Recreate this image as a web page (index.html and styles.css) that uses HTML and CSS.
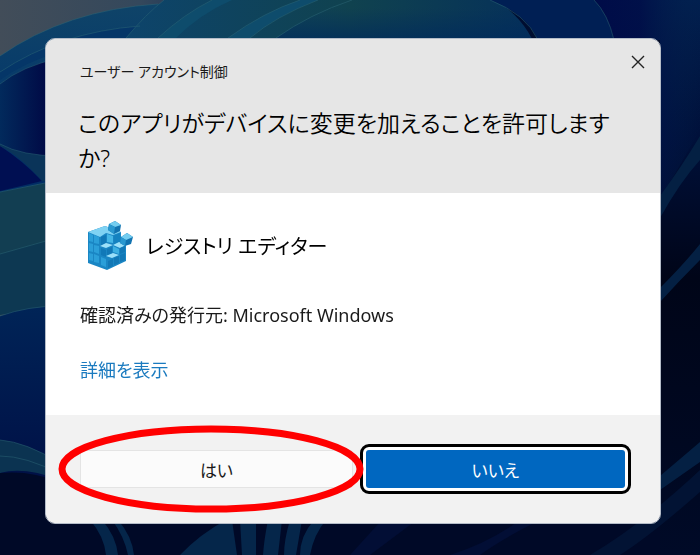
FILE: index.html
```html
<!DOCTYPE html>
<html lang="ja">
<head>
  <meta charset="UTF-8" />
  <title>ユーザー アカウント制御</title>
  <meta name="viewport" content="width=device-width, initial-scale=1.0" />
  <link rel="stylesheet" href="styles.css">
</head>
<body>

  <!-- Desktop wallpaper -->
  <svg class="wallpaper" viewBox="0 0 700 555" preserveAspectRatio="none" aria-hidden="true">
    <defs>
      <linearGradient id="sky" x1="0" y1="0" x2="1" y2="0">
        <stop offset="0" stop-color="#424d59" />
        <stop offset="0.2" stop-color="#34485c" />
        <stop offset="0.4" stop-color="#00174b" />
        <stop offset="1" stop-color="#00071e" />
      </linearGradient>
      <linearGradient id="petal" gradientUnits="userSpaceOnUse" x1="0" y1="0" x2="0" y2="200">
        <stop offset="0" stop-color="#0f4468" />
        <stop offset="0.5" stop-color="#06386a" />
        <stop offset="1" stop-color="#002a63" />
      </linearGradient>
      <linearGradient id="leaf" gradientUnits="userSpaceOnUse" x1="120" y1="0" x2="540" y2="0">
        <stop offset="0" stop-color="#0d446c" />
        <stop offset="0.55" stop-color="#10424f" />
        <stop offset="1" stop-color="#05305a" />
      </linearGradient>
      <linearGradient id="shade" gradientUnits="userSpaceOnUse" x1="0" y1="8" x2="0" y2="42">
        <stop offset="0" stop-color="#002a5c" stop-opacity="0" />
        <stop offset="1" stop-color="#002a5c" stop-opacity="0.75" />
      </linearGradient>
      <linearGradient id="deep" gradientUnits="userSpaceOnUse" x1="0" y1="0" x2="46" y2="0">
        <stop offset="0" stop-color="#022a5c" />
        <stop offset="1" stop-color="#000a46" />
      </linearGradient>
      <linearGradient id="edge" gradientUnits="userSpaceOnUse" x1="0" y1="0" x2="0" y2="555">
        <stop offset="0" stop-color="#02204f" />
        <stop offset="0.25" stop-color="#00103a" />
        <stop offset="0.5" stop-color="#000518" />
        <stop offset="1" stop-color="#000a27" />
      </linearGradient>
      <linearGradient id="corner" gradientUnits="userSpaceOnUse" x1="600" y1="0" x2="700" y2="0">
        <stop offset="0" stop-color="#000c48" />
        <stop offset="0.4" stop-color="#000c48" stop-opacity="0.8" />
        <stop offset="1" stop-color="#02244f" stop-opacity="0" />
      </linearGradient>
      <linearGradient id="side" x1="0" y1="0" x2="0" y2="1">
        <stop offset="0" stop-color="#002457" />
        <stop offset="1" stop-color="#001046" />
      </linearGradient>
    </defs>
    <rect width="700" height="555" fill="url(#sky)" />
    <path d="M0 56Q66 10 158 4H350V200H0Z" fill="url(#petal)" />
    <path d="M0 72Q60 32 140 26L128 44Q50 44 0 80Z" fill="#053668" />
    <path d="M0 84Q22 66 60 58V164Q22 160 0 144Z" fill="url(#deep)" />
    <path d="M0 146Q22 160 42 181L0 191Z" fill="#000f52" />
    <path d="M126 38Q146 14 164 0H496Q530 22 540 60H110Z" fill="url(#leaf)" />
    <path d="M158 38Q184 14 212 0H232Q200 14 176 38ZM228 38Q264 12 300 0H318Q276 16 250 38Z" fill="#0e4c6c" />
    <path d="M276 38Q310 14 352 0H496Q530 22 540 60H260Z" fill="url(#shade)" />
    <path d="M490 0Q526 14 538 40H614Q608 14 594 0Z" fill="#001f54" />
    <path d="M594 0Q608 14 614 40H660V555H700V0Z" fill="url(#edge)" />
    <path d="M594 0Q608 14 614 40H660V200L700 130V0Z" fill="url(#corner)" />
    <path d="M0 144Q22 156 60 156V184L42 181Q20 156 0 146Z" fill="#0a3459" />
    <path d="M0 192L60 180V310H0Z" fill="#123e52" />
    <path d="M0 254L60 237V306L0 315Z" fill="#0d3852" />
    <path d="M0 316Q28 306 60 306V480H0Z" fill="url(#side)" />
    <path d="M0 440Q26 442 60 463V480Q24 466 0 473Z" fill="#0b3351" />
    <path d="M0 473Q30 470 60 482V524H660V555H0Z" fill="#000927" />
    <path d="M90 520Q104 536 106 555H118Q116 536 102 520ZM112 520Q124 536 128 555H134Q132 536 118 520ZM180 555Q200 534 226 520H232L237 555ZM240 520L242 555H256V520ZM268 520Q264 540 263 555H278L282 520ZM290 520Q284 540 284 555H296L302 520ZM314 520Q300 536 300 555H310Q314 534 326 520Z" fill="#05264a" />
    <path d="M350 555L380 522H414L370 555ZM450 555Q490 542 520 520H540Q500 540 480 555Z" fill="#020e35" />
    <path d="M660 196Q682 166 700 136V160Q680 182 660 218ZM660 288Q684 264 700 244V260Q680 280 660 302ZM660 476L700 442V462L660 490Z" fill="#042043" />
    <path d="M590 555Q640 526 700 470V492Q650 536 620 555Z" fill="#021334" />
    <g fill="none" stroke="#2c6676" stroke-width="1" opacity="0.5">
      <path d="M0 56Q66 10 158 4M0 72Q60 32 140 26M0 84Q22 66 60 58M126 38Q146 14 164 0M158 38Q184 14 212 0M228 38Q264 12 300 0M250 38Q276 16 318 0M276 38Q310 14 352 0" />
      <path d="M490 0Q526 14 538 40M594 0Q608 14 614 40M0 144Q22 156 60 156M0 192L60 180M0 254L60 237M0 316Q28 306 60 306M0 440Q26 442 60 463M0 456Q26 456 60 474" />
    </g>
  </svg>

  <main class="dialog" role="dialog" aria-labelledby="question">
    <header class="dialog-header">
      <p class="caption">ユーザー アカウント制御</p>
      <h1 id="question">このアプリがデバイスに変更を加えることを許可しますか?</h1>
      <button type="button" class="close" aria-label="閉じる">
        <svg viewBox="0 0 14 14" width="14" height="14"><path d="M1 1L13 13M13 1L1 13" /></svg>
      </button>
    </header>

    <section class="dialog-body">
      <div class="app">
        <svg class="app-icon" viewBox="0 0 52 56" width="52" height="56" aria-hidden="true">
          <path d="M4 15L21 9L37 15V28L42 26V44L23 53L4 46Z" fill="#1a86c4" />
          <path d="M4 15L21 9L37 15L29 18L22 16L16 20Z" fill="#7fd2f3" />
          <path d="M5 16L9 18V25L5 24ZM10 18L15 20V27L10 26ZM5 26L9 27V35L5 34ZM10 28L15 29V37L10 35ZM5 36L9 37V44L5 43ZM10 37L15 39V46L10 45ZM17 40L22 42V50L17 48Z" fill="#2b9fd9" />
          <path d="M17 20L22 18V28L17 30ZM17 31L22 33V40L17 38Z" fill="#1179b8" />
          <path d="M23 17L29 19V26L23 25Z" fill="#45b6e6" />
          <path d="M30 19L36 16V26L30 27Z" fill="#1482c0" />
          <path d="M16 29L22 26L29 28L22 31ZM29 28L35 25L42 28L36 31ZM22 39L29 36L35 38L28 41Z" fill="#9ce0f9" />
          <path d="M23 32L28 30V36L23 38ZM36 31L41 29V35L36 37ZM24 44L29 42V49L24 51ZM30 41L35 39V46L30 48ZM36 38L41 36V43L36 45Z" fill="#1278b6" />
          <path d="M29 29L35 32V37L29 35Z" fill="#3db0e2" />
          <path d="M25 7L31 4L37 8L36 14L30 17L24 13Z" fill="#1273b0" />
          <path d="M25 7L31 4L37 8L31 10Z" fill="#74cdf0" />
          <path d="M25 7L31 10L30 17L24 13Z" fill="#2a98d0" />
          <path d="M37 20L43 16L49 20L47 27L41 29L36 26Z" fill="#1273b0" />
          <path d="M37 20L43 16L49 20L42 23Z" fill="#74cdf0" />
          <path d="M37 20L42 23L41 29L36 26Z" fill="#2a98d0" />
        </svg>
        <h2>レジストリ エディター</h2>
      </div>
      <p class="publisher">確認済みの発行元: Microsoft Windows</p>
      <a class="details" href="#">詳細を表示</a>
    </section>

    <footer class="dialog-actions">
      <button type="button" class="yes">はい</button>
      <button type="button" class="no">いいえ</button>
      <svg class="marker" viewBox="0 0 306 88" preserveAspectRatio="none" aria-hidden="true">
        <ellipse cx="153" cy="44" rx="149" ry="40" />
      </svg>
    </footer>
  </main>

</body>
</html>
```

FILE: styles.css
```css
:root {
  --header-bg: #e6e6e6;
  --footer-bg: #f2f2f2;
  --accent: #0067c0;
  --link: #1a7abf;
  --text: #1a1a1a;
  --font: "Noto Sans", "Noto Sans CJK JP", sans-serif;
}

* {
  margin: 0;
  padding: 0;
  box-sizing: border-box;
}

body {
  min-height: 100vh;
  padding: 38px 39px 31px 45px;
  font-family: var(--font);
  font-feature-settings: "palt";
  color: var(--text);
  background-color: #000a27;
}

.wallpaper {
  position: fixed;
  inset: 0;
  width: 100%;
  height: 100%;
}

.dialog {
  position: relative;
  border: 1px solid #b4bcc8;
  border-radius: 10px;
  background-color: #fff;
  background-clip: padding-box;
}

.dialog-header {
  position: relative;
  padding: 23px 36px 17px 32px;
  border-radius: 9px 9px 0 0;
  background-color: var(--header-bg);
}

.caption {
  padding-left: 2px;
  font-size: 14px;
  line-height: 20px;
  margin-bottom: 24px;
}

h1 {
  font-size: 23px;
  font-weight: 350;
  line-height: 35px;
  color: #000;
}

.close {
  position: absolute;
  top: 10px;
  right: 8px;
  width: 28px;
  height: 28px;
  border: none;
  background: none;
}

.close path {
  fill: none;
  stroke: #222;
  stroke-width: 1.4;
}

.dialog-body {
  padding: 24px 34px 31px;
}

.app {
  display: flex;
  align-items: center;
  gap: 10px;
  margin-left: 4px;
  margin-bottom: 28px;
}

h2 {
  padding-top: 4px;
  font-size: 20px;
  font-weight: 400;
  line-height: 32px;
  color: #000;
}

.publisher {
  font-size: 18px;
  line-height: 28px;
  margin-bottom: 27px;
}

.details {
  display: block;
  width: fit-content;
  font-size: 18px;
  line-height: 28px;
  color: var(--link);
  text-decoration: none;
}

.dialog-actions {
  position: relative;
  display: grid;
  grid-template-columns: 20fr 19fr;
  gap: 13px;
  padding: 35px 35px 35px 34px;
  border-radius: 0 0 9px 9px;
  background-color: var(--footer-bg);
}

.dialog-actions button {
  height: 38px;
  border: 1px solid #e4e4e4;
  border-radius: 3px;
  font: inherit;
  font-size: 17px;
  font-feature-settings: inherit;
  color: var(--text);
  background-color: #fbfbfb;
}

.dialog-actions .no {
  border: none;
  color: #fff;
  background-color: var(--accent);
  box-shadow: 0 0 0 4px #fff;
  outline: 3px solid #000;
  outline-offset: 3px;
}

/* Red ring drawn over the button to press */
.marker {
  position: absolute;
  top: 10px;
  left: 12px;
  width: 306px;
  height: 88px;
  pointer-events: none;
}

.marker ellipse {
  fill: none;
  stroke: #f00;
  stroke-width: 7;
}
```
